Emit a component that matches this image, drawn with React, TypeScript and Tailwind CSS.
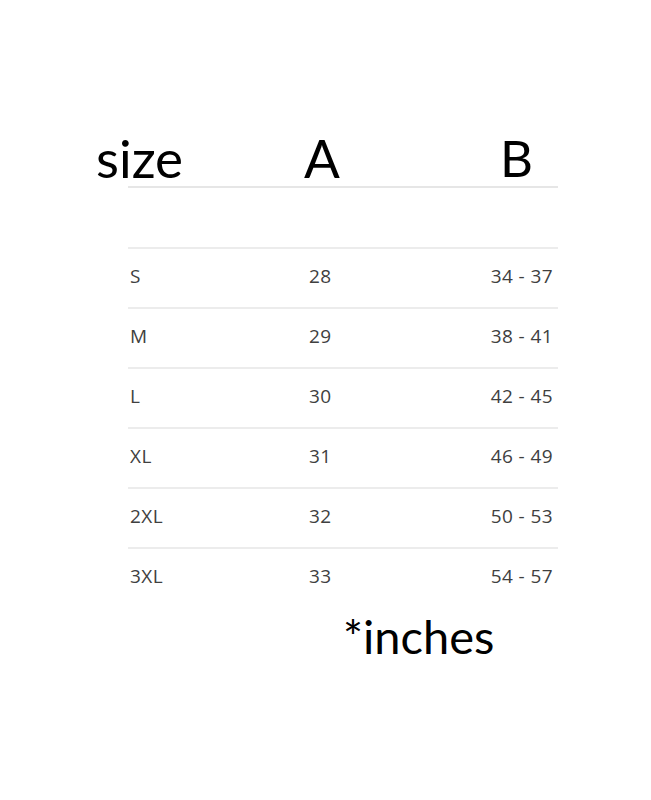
import React from "react";

const rows = [
  ["S", "28", "34 - 37"],
  ["M", "29", "38 - 41"],
  ["L", "30", "42 - 45"],
  ["XL", "31", "46 - 49"],
  ["2XL", "32", "50 - 53"],
  ["3XL", "33", "54 - 57"],
];

export default function App() {
  return (
    <div className="w-[651px] h-[800px] bg-white relative overflow-hidden" style={{ fontFamily: "Lato, 'Open Sans', sans-serif" }}>
      <div className="pt-[128px]">
        <div className="flex items-end pl-[96px] text-[53px] leading-[60px] text-black h-[60px]">
          <div className="w-[208px]">size</div>
          <div className="w-[196px] tracking-[1px]">A</div>
          <div className="text-[51px]">B</div>
        </div>
        <div className="ml-[128px] w-[430px] mt-[-2px]">
          <div className="h-[61px] border-t-2 border-[#e6e6e6]" />
          {rows.map((r) => (
            <div
              key={r[0]}
              className="flex items-center h-[60px] pb-[4px] border-t-2 border-[#ececec] text-[19px] tracking-[0.4px] text-[#404040]"
              style={{ fontFamily: "'Open Sans', Lato, sans-serif" }}
            >
              <div className="w-[181px] pl-[2px]">{r[0]}</div>
              <div className="flex-1">{r[1]}</div>
              <div className="pr-[5px]">{r[2]}</div>
            </div>
          ))}
        </div>
        <div className="pl-[343px] text-[47px] leading-[50px] text-black mt-[4px]">*inches</div>
      </div>
    </div>
  );
}
